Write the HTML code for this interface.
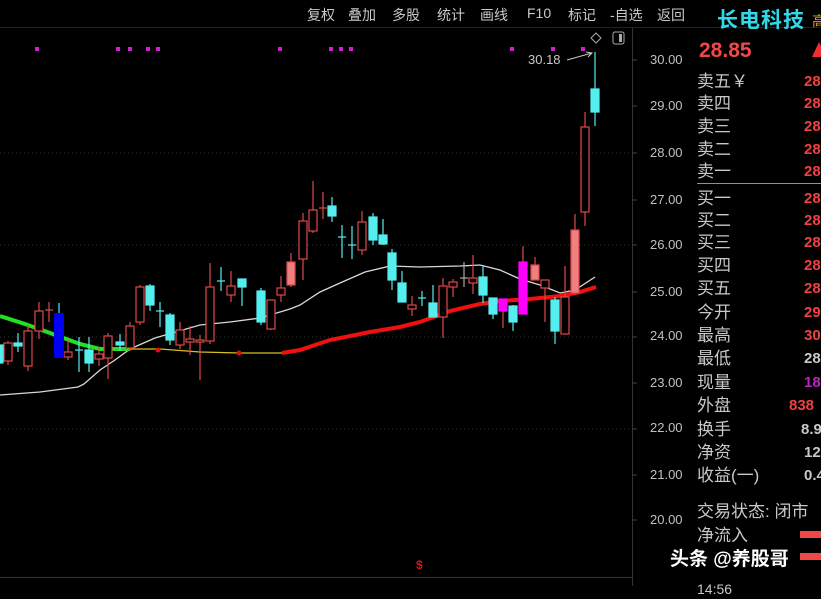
<!DOCTYPE html>
<html><head><meta charset="utf-8"><style>
html,body{margin:0;padding:0;background:#000;width:821px;height:586px;overflow:hidden;font-family:"Liberation Sans","Noto Sans CJK SC",sans-serif}
.a{position:absolute;white-space:nowrap}
.m{color:#c8c8c8;font-size:14px;top:5px}
.ax{color:#c0c0c0;font-size:13px;left:650px}
.lb{color:#c8c8c8;font-size:17px;left:697px;line-height:20px}
.v{color:#f04040;font-size:15px;left:804px;font-weight:bold}
</style></head><body>
<svg width="821" height="586" style="position:absolute;left:0;top:0">
<g stroke="#333" stroke-dasharray="1,3" stroke-width="1">
<line x1="0" y1="153" x2="632" y2="153"/><line x1="0" y1="245" x2="632" y2="245"/><line x1="0" y1="337" x2="632" y2="337"/><line x1="0" y1="429" x2="632" y2="429"/>
</g>
<line x1="632.5" y1="28" x2="632.5" y2="586" stroke="#333"/>
<line x1="0" y1="577.5" x2="632" y2="577.5" stroke="#333"/>
<line x1="0" y1="27.5" x2="821" y2="27.5" stroke="#222"/>
<g stroke="#444"><line x1="632" y1="60" x2="637" y2="60"/><line x1="632" y1="106" x2="637" y2="106"/><line x1="632" y1="153" x2="637" y2="153"/><line x1="632" y1="200" x2="637" y2="200"/><line x1="632" y1="245" x2="637" y2="245"/><line x1="632" y1="292" x2="637" y2="292"/><line x1="632" y1="337" x2="637" y2="337"/><line x1="632" y1="383" x2="637" y2="383"/><line x1="632" y1="429" x2="637" y2="429"/><line x1="632" y1="475" x2="637" y2="475"/><line x1="632" y1="520" x2="637" y2="520"/></g>
<line x1="697" y1="183.5" x2="821" y2="183.5" stroke="#c8882a"/>
<g fill="#d020d0"><rect x="35" y="47" width="4" height="4"/><rect x="116" y="47" width="4" height="4"/><rect x="128" y="47" width="4" height="4"/><rect x="146" y="47" width="4" height="4"/><rect x="156" y="47" width="4" height="4"/><rect x="278" y="47" width="4" height="4"/><rect x="329" y="47" width="4" height="4"/><rect x="339" y="47" width="4" height="4"/><rect x="349" y="47" width="4" height="4"/><rect x="510" y="47" width="4" height="4"/><rect x="551" y="47" width="4" height="4"/><rect x="581" y="47" width="4" height="4"/></g>
<path d="M596 33 L601 38 L596 43 L591 38 Z" fill="none" stroke="#aaa"/>
<rect x="613" y="32" width="11" height="12" rx="2" fill="none" stroke="#aaa"/><rect x="619" y="34" width="3" height="8" fill="#aaa"/>
<text x="528" y="64" fill="#c8c8c8" font-size="13" font-family="Liberation Sans">30.18</text>
<path d="M567 60 L592 53 M586 52 L592 53 L588 57" stroke="#c8c8c8" fill="none"/>
<polyline points="0,395 40,392 78,387 84,384 100,370 115,360 130,349 155,338 200,325 230,322 260,318 290,309 300,305 320,292 340,283 365,272 390,266 420,267 460,266 480,265 500,270 520,279 540,285 560,293 575,290 595,277" fill="none" stroke="#d8d8d8" stroke-width="1.3"/>
<polyline points="0,316 25,324 50,333 80,344 100,349 130,349" fill="none" stroke="#22e022" stroke-width="4"/>
<polyline points="130,349 160,349 200,352 240,353 282,353" fill="none" stroke="#d8c020" stroke-width="1.3"/>
<circle cx="158" cy="350" r="2.5" fill="#e01010"/><circle cx="239" cy="353" r="2.5" fill="#e01010"/>
<polyline points="282,353 300,350 330,340 370,332 400,327 420,322 450,311 480,304 500,301 530,299 560,296 580,292 596,287" fill="none" stroke="#f01010" stroke-width="4"/>
<g stroke-width="1.2">
<g stroke="#e04848" fill="#000">
<line x1="8" y1="341" x2="8" y2="365"/><rect x="4" y="343" width="8" height="18"/>
<line x1="28" y1="325" x2="28" y2="371"/><rect x="24" y="331" width="8" height="35"/>
<line x1="39" y1="302" x2="39" y2="339"/><rect x="35" y="311" width="8" height="20"/>
<line x1="49" y1="302" x2="49" y2="322"/><line x1="45" y1="310" x2="53" y2="310"/>
<line x1="68" y1="340" x2="68" y2="360"/><rect x="64" y="352" width="8" height="5"/>
<line x1="99" y1="347" x2="99" y2="366"/><rect x="95" y="354" width="8" height="5"/>
<line x1="108" y1="333" x2="108" y2="379"/><rect x="104" y="336" width="8" height="22"/>
<line x1="130" y1="322" x2="130" y2="351"/><rect x="126" y="326" width="8" height="22"/>
<line x1="140" y1="285" x2="140" y2="325"/><rect x="136" y="287" width="8" height="35"/>
<line x1="180" y1="322" x2="180" y2="349"/><rect x="176" y="330" width="8" height="15"/>
<line x1="190" y1="326" x2="190" y2="355"/><rect x="186" y="339" width="8" height="3"/>
<line x1="200" y1="335" x2="200" y2="380"/><rect x="196" y="340" width="8" height="2"/>
<line x1="210" y1="263" x2="210" y2="344"/><rect x="206" y="287" width="8" height="54"/>
<line x1="231" y1="271" x2="231" y2="302"/><rect x="227" y="286" width="8" height="9"/>
<line x1="271" y1="300" x2="271" y2="330"/><rect x="267" y="300" width="8" height="29"/>
<line x1="281" y1="276" x2="281" y2="302"/><rect x="277" y="288" width="8" height="7"/>
<line x1="303" y1="213" x2="303" y2="280"/><rect x="299" y="221" width="8" height="38"/>
<line x1="313" y1="181" x2="313" y2="233"/><rect x="309" y="210" width="8" height="21"/>
<line x1="323" y1="192" x2="323" y2="219"/><line x1="319" y1="208" x2="327" y2="208"/>
<line x1="362" y1="211" x2="362" y2="255"/><rect x="358" y="222" width="8" height="28"/>
<line x1="412" y1="296" x2="412" y2="316"/><rect x="408" y="305" width="8" height="4"/>
<line x1="443" y1="278" x2="443" y2="338"/><rect x="439" y="286" width="8" height="31"/>
<line x1="453" y1="279" x2="453" y2="297"/><rect x="449" y="282" width="8" height="5"/>
<line x1="473" y1="255" x2="473" y2="294"/><rect x="469" y="278" width="8" height="5"/>
<line x1="545" y1="280" x2="545" y2="322"/><rect x="541" y="280" width="8" height="8"/>
<line x1="565" y1="266" x2="565" y2="334"/><rect x="561" y="297" width="8" height="37"/>
<line x1="585" y1="112" x2="585" y2="226"/><rect x="581" y="127" width="8" height="85"/>
</g>
<g stroke="#aaa"><line x1="464" y1="262" x2="464" y2="287"/><line x1="460" y1="278" x2="468" y2="278"/></g>
<g stroke="#55eeee" fill="#55eeee">
<rect x="0" y="345" width="3" height="18"/>
<line x1="18" y1="333" x2="18" y2="352"/><rect x="14" y="343" width="8" height="3"/>
<line x1="79" y1="337" x2="79" y2="372"/><line x1="75" y1="350" x2="83" y2="350"/>
<line x1="89" y1="337" x2="89" y2="372"/><rect x="85" y="350" width="8" height="13"/>
<line x1="120" y1="334" x2="120" y2="351"/><rect x="116" y="342" width="8" height="3"/>
<line x1="150" y1="284" x2="150" y2="311"/><rect x="146" y="286" width="8" height="19"/>
<line x1="160" y1="302" x2="160" y2="327"/><line x1="156" y1="311" x2="164" y2="311"/>
<line x1="170" y1="313" x2="170" y2="345"/><rect x="166" y="315" width="8" height="25"/>
<line x1="221" y1="267" x2="221" y2="291"/><line x1="217" y1="281" x2="225" y2="281"/>
<line x1="242" y1="279" x2="242" y2="306"/><rect x="238" y="279" width="8" height="8"/>
<line x1="261" y1="288" x2="261" y2="325"/><rect x="257" y="291" width="8" height="31"/>
<line x1="332" y1="197" x2="332" y2="222"/><rect x="328" y="206" width="8" height="10"/>
<line x1="342" y1="225" x2="342" y2="258"/><line x1="338" y1="237" x2="346" y2="237"/>
<line x1="352" y1="226" x2="352" y2="259"/><line x1="348" y1="245" x2="356" y2="245"/>
<line x1="373" y1="213" x2="373" y2="245"/><rect x="369" y="217" width="8" height="23"/>
<line x1="383" y1="219" x2="383" y2="245"/><rect x="379" y="235" width="8" height="9"/>
<line x1="392" y1="249" x2="392" y2="290"/><rect x="388" y="253" width="8" height="27"/>
<line x1="402" y1="271" x2="402" y2="302"/><rect x="398" y="283" width="8" height="19"/>
<line x1="422" y1="291" x2="422" y2="306"/><line x1="418" y1="298" x2="426" y2="298"/>
<line x1="433" y1="285" x2="433" y2="317"/><rect x="429" y="303" width="8" height="14"/>
<line x1="483" y1="265" x2="483" y2="303"/><rect x="479" y="277" width="8" height="18"/>
<line x1="493" y1="298" x2="493" y2="319"/><rect x="489" y="298" width="8" height="16"/>
<line x1="513" y1="305" x2="513" y2="331"/><rect x="509" y="306" width="8" height="16"/>
<line x1="555" y1="297" x2="555" y2="344"/><rect x="551" y="300" width="8" height="31"/>
<line x1="595" y1="52" x2="595" y2="126"/><rect x="591" y="89" width="8" height="23"/>
</g>
<g stroke="#e04848" fill="#f08080">
<line x1="291" y1="253" x2="291" y2="287"/><rect x="287" y="262" width="8" height="23"/>
<line x1="535" y1="257" x2="535" y2="280"/><rect x="531" y="265" width="8" height="15"/>
<line x1="575" y1="214" x2="575" y2="294"/><rect x="571" y="230" width="8" height="63"/>
</g>
<g stroke="#ff00ff" fill="#ff00ff">
<line x1="503" y1="299" x2="503" y2="328" stroke="#e04848"/><rect x="499" y="299" width="8" height="12"/>
<line x1="523" y1="246" x2="523" y2="314" stroke="#e04848"/><rect x="519" y="262" width="8" height="52"/>
</g>
<line x1="59" y1="303" x2="59" y2="313" stroke="#55eeee"/><rect x="54" y="313" width="10" height="45" fill="#0000f0"/>
</g>
<rect x="800" y="531" width="21" height="7" fill="#f04848"/>
<rect x="800" y="553" width="21" height="7" fill="#f04848"/>
<path d="M812 57 L819 42 L826 57 Z" fill="#f03030"/>
</svg>
<div class="a m" style="left:307px">复权</div>
<div class="a m" style="left:348px">叠加</div>
<div class="a m" style="left:392px">多股</div>
<div class="a m" style="left:437px">统计</div>
<div class="a m" style="left:480px">画线</div>
<div class="a m" style="left:527px">F10</div>
<div class="a m" style="left:568px">标记</div>
<div class="a m" style="left:610px">-自选</div>
<div class="a m" style="left:657px">返回</div>
<div class="a" style="left:717px;top:4px;color:#30d8e8;font-size:21px;font-weight:bold;letter-spacing:1px">长电科技</div>
<div class="a" style="left:812px;top:11px;color:#e0a020;font-size:14px">高</div>
<div class="a" style="left:699px;top:39px;color:#f04848;font-size:21px;font-weight:bold">28.85</div>
<div class="a ax" style="top:52px">30.00</div>
<div class="a ax" style="top:98px">29.00</div>
<div class="a ax" style="top:145px">28.00</div>
<div class="a ax" style="top:192px">27.00</div>
<div class="a ax" style="top:237px">26.00</div>
<div class="a ax" style="top:284px">25.00</div>
<div class="a ax" style="top:328px">24.00</div>
<div class="a ax" style="top:375px">23.00</div>
<div class="a ax" style="top:420px">22.00</div>
<div class="a ax" style="top:467px">21.00</div>
<div class="a ax" style="top:512px">20.00</div>
<div class="a lb" style="top:72px">卖五￥</div><div class="a v" style="top:73px">28</div>
<div class="a lb" style="top:94px">卖四</div><div class="a v" style="top:95px">28</div>
<div class="a lb" style="top:117px">卖三</div><div class="a v" style="top:118px">28</div>
<div class="a lb" style="top:140px">卖二</div><div class="a v" style="top:141px">28</div>
<div class="a lb" style="top:162px">卖一</div><div class="a v" style="top:163px">28</div>
<div class="a lb" style="top:189px">买一</div><div class="a v" style="top:190px">28</div>
<div class="a lb" style="top:211px">买二</div><div class="a v" style="top:212px">28</div>
<div class="a lb" style="top:233px">买三</div><div class="a v" style="top:234px">28</div>
<div class="a lb" style="top:256px">买四</div><div class="a v" style="top:257px">28</div>
<div class="a lb" style="top:279px">买五</div><div class="a v" style="top:280px">28</div>
<div class="a lb" style="top:303px">今开</div><div class="a v" style="top:304px">29</div>
<div class="a lb" style="top:326px">最高</div><div class="a v" style="top:327px">30</div>
<div class="a lb" style="top:349px">最低</div><div class="a v" style="top:350px;color:#c8c8c8">28</div>
<div class="a lb" style="top:373px">现量</div><div class="a v" style="top:374px;color:#c020c0">182</div>
<div class="a lb" style="top:396px">外盘</div><div class="a v" style="top:397px;left:789px">838</div>
<div class="a lb" style="top:420px">换手</div><div class="a v" style="top:421px;left:801px;color:#c8c8c8">8.9</div>
<div class="a lb" style="top:443px">净资</div><div class="a v" style="top:444px;color:#c8c8c8">12</div>
<div class="a lb" style="top:466px">收益(一)</div><div class="a v" style="top:467px;color:#c8c8c8">0.4</div>
<div class="a lb" style="top:502px">交易状态: 闭市</div>
<div class="a lb" style="top:526px">净流入</div>
<div class="a lb" style="top:579px;font-size:14px">14:56</div>
<div class="a" style="left:670px;top:544px;color:#fff;font-size:19px;font-weight:bold;text-shadow:0 0 3px #000,1px 1px 2px #000">头条 @养股哥</div>
<div class="a" style="left:416px;top:558px;color:#e01010;font-size:12px;font-weight:bold">$</div>
</body></html>
